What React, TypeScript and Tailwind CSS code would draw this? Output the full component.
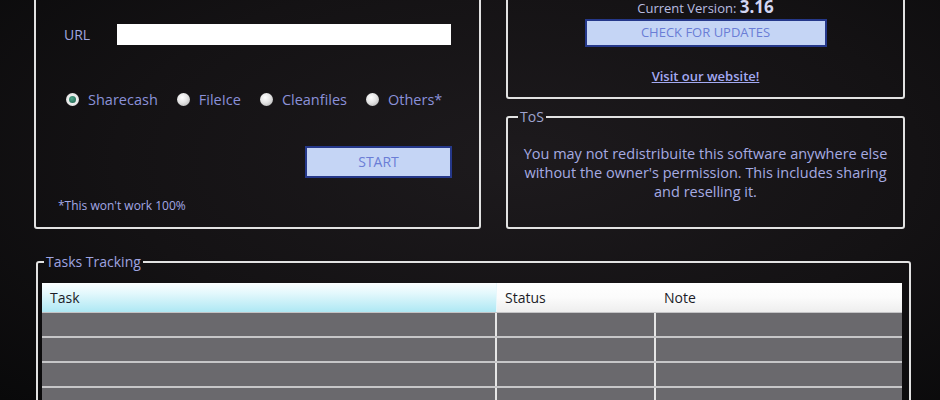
import { useState } from 'react';

const sites = ['Sharecash', 'FileIce', 'Cleanfiles', 'Others*'];

function Radio({ label, checked, onSelect }: { label: string; checked: boolean; onSelect: () => void }) {
  return (
    <button type="button" onClick={onSelect} className="flex items-center gap-[9px]">
      <span
        className={`flex h-[13px] w-[13px] items-center justify-center rounded-full ${
          checked
            ? 'bg-[radial-gradient(circle,#ffffff_0%,#d6d6d6_100%)]'
            : 'bg-[radial-gradient(circle_at_40%_35%,#ffffff_0%,#e4e4e4_45%,#a9a9a9_100%)]'
        }`}
      >
        {checked && <span className="h-[7px] w-[7px] rounded-full bg-[radial-gradient(circle_at_40%_35%,#4fa58a_0%,#1b5e4a_100%)]" />}
      </span>
      <span className="text-[14.5px] text-[#8b91d9]">{label}</span>
    </button>
  );
}

const rows = [0, 1, 2, 3];

export default function App() {
  const [site, setSite] = useState('Sharecash');

  return (
    <div
      className="h-[400px] w-[940px] overflow-hidden bg-[radial-gradient(ellipse_at_55%_40%,#1d1a1d_0%,#141214_55%,#09090a_100%)] text-[#a3a8e6]"
      style={{ fontFamily: '"Open Sans", "DejaVu Sans", sans-serif' }}
    >
      {/* top panels */}
      <div className="-mt-[12px] flex gap-[25px] pl-[34px]">
        <div className="flex h-[241px] w-[447px] flex-col rounded-[3px] border-2 border-[#e2e2e2] pt-[34px] pr-[27px] pl-[28px]">
          <div className="flex items-center">
            <span className="w-[53px] text-[14px] text-[#a0a6e0]">URL</span>
            <input className="h-[21px] w-[334px] bg-white px-1 text-[13px] text-black outline-none" />
          </div>

          <div className="mt-[44px] ml-[2px] flex items-center gap-[19px]">
            {sites.map((s) => (
              <Radio key={s} label={s} checked={site === s} onSelect={() => setSite(s)} />
            ))}
          </div>

          <div className="mt-[35px] flex justify-end">
            <button className="h-[32px] w-[147px] border-2 border-[#25388a] bg-[#c5d5f5] text-[14px] font-medium text-[#6a7dd6]">
              START
            </button>
          </div>

          <p className="mt-[19px] -ml-[6px] text-[12px] text-[#a3a8e6]">*This won't work 100%</p>
        </div>

        <div className="flex w-[399px] flex-col">
          <div className="flex h-[111px] flex-col items-center rounded-[3px] border-2 border-[#e2e2e2]">
            <p className="mt-[10px] text-[13px] leading-[14px] text-[#b9bde0]">
              Current Version: <span className="text-[17px] leading-[14px] font-bold text-[#d2d6f2]">3.16</span>
            </p>
            <button className="mt-[4px] h-[28px] w-[242px] border-2 border-[#25388a] bg-[#c5d5f5] text-[13px] font-medium text-[#6a7dd6]">
              CHECK FOR UPDATES
            </button>
            <a href="#" className="mt-[20px] text-[13px] font-semibold text-[#a4aaf2] underline">
              Visit our website!
            </a>
          </div>

          <fieldset className="mt-[7px] h-[123px] rounded-[3px] border-2 border-[#e2e2e2] px-[12px]">
            <legend className="-ml-[2px] px-[2px] text-[14px] text-[#9ea3cf]">ToS</legend>
            <p className="mt-[17px] text-center text-[14.5px] leading-[19px] text-[#a6abe2]">
              You may not redistribuite this software anywhere else without the owner's permission. This includes
              sharing and reselling it.
            </p>
          </fieldset>
        </div>
      </div>

      {/* tasks */}
      <fieldset className="mt-[22px] ml-[36px] w-[875px] rounded-[3px] border-2 border-[#e2e2e2] pr-[7px] pb-2 pl-[4px]">
        <legend className="ml-[2px] px-[2px] text-[14px] text-[#9ea3e0]">Tasks Tracking</legend>
        <div className="mt-[11px] w-[860px]">
          <div className="grid h-[30px] grid-cols-[455px_159px_1fr] border-b border-[#c4c4c6] text-[14px] text-[#1c1c28]">
            <div className="flex items-center border-r border-[#e8f7fb] bg-[linear-gradient(#fbfeff_0%,#e3f8fc_35%,#aee8f4_100%)] pl-[8px]">
              Task
            </div>
            <div className="flex items-center bg-[linear-gradient(#ffffff_0%,#fbfbfb_50%,#eeeeee_100%)] pl-[8px]">
              Status
            </div>
            <div className="flex items-center bg-[linear-gradient(#ffffff_0%,#fbfbfb_50%,#eeeeee_100%)] pl-[8px]">
              Note
            </div>
          </div>
          {rows.map((r) => (
            <div key={r} className="grid h-[25px] grid-cols-[455px_159px_1fr] border-b-2 border-[#c6c6c8] bg-[#6a696d]">
              <div className="border-r-2 border-[#e6e6e6]" />
              <div className="border-r-2 border-[#e6e6e6]" />
              <div />
            </div>
          ))}
        </div>
      </fieldset>
    </div>
  );
}
